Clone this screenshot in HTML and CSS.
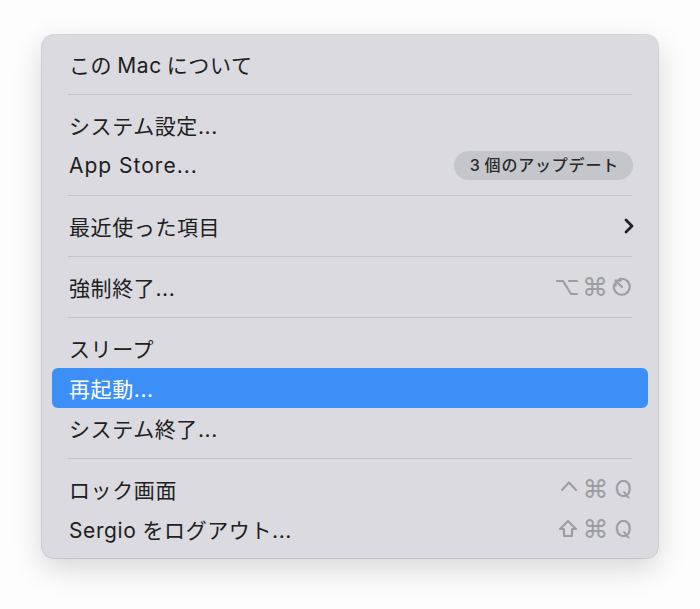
FILE: index.html
```html
<!DOCTYPE html>
<html lang="ja">
<head>
  <meta charset="UTF-8" />
  <meta name="viewport" content="width=device-width, initial-scale=1.0"/>
  <title>Apple Menu</title>
  <link rel="stylesheet" href="styles.css">
</head>
<body>
  <div class="menu">
    <div class="item"><span>この<span class="latin">Mac</span>について</span></div>

    <div class="sep"></div>

    <div class="item"><span>システム設定...</span></div>
    <div class="item">
      <span class="wide">App Store...</span>
      <span class="badge">3<span class="gap"></span>個のアップデート</span>
    </div>

    <div class="sep"></div>

    <div class="item">
      <span>最近使った項目</span>
      <svg class="chevron" width="12" height="18" viewBox="0 0 12 18">
        <polyline points="3,3 9,9 3,15" />
      </svg>
    </div>

    <div class="sep"></div>

    <div class="item">
      <span>強制終了...</span>
      <span class="keys">
        <svg class="sym" width="22" height="20" viewBox="0 0 22 20">
          <path d="M1 4 H7 L15 17 H21" />
          <path d="M13 4 H21" />
        </svg>
        <span class="cmd">⌘</span>
        <svg class="sym" width="20" height="20" viewBox="0 0 20 20">
          <path d="M7.4 2.1 A8 8 0 1 1 2.1 7.4" />
          <path d="M4.2 4.2 L10 10" />
          <path d="M3.6 8.8 V3.6 H8.8" />
        </svg>
      </span>
    </div>

    <div class="sep"></div>

    <div class="item"><span>スリープ</span></div>
    <div class="item active"><span>再起動...</span></div>
    <div class="item"><span>システム終了...</span></div>

    <div class="sep"></div>

    <div class="item">
      <span>ロック画面</span>
      <span class="keys">
        <svg class="sym" width="18" height="20" viewBox="0 0 18 20">
          <polyline points="2,11 9,3.5 16,11" />
        </svg>
        <span class="cmd">⌘</span><span class="q">Q</span>
      </span>
    </div>
    <div class="item">
      <span>Sergio<span class="gap"></span>をログアウト...</span>
      <span class="keys">
        <svg class="sym" width="20" height="20" viewBox="0 0 20 20">
          <path d="M10 2 L18 10 H14 V17 H6 V10 H2 Z" />
        </svg>
        <span class="cmd">⌘</span><span class="q">Q</span>
      </span>
    </div>
  </div>
</body>
</html>
```

FILE: styles.css
```css
html {
  background: #fdfdfd;
}

body {
  margin: 0;
  padding: 35px 0 51px 42px;
  font-family: 'Inter', 'Noto Sans CJK JP', sans-serif;
}

.menu {
  width: 616px;
  padding: 9px 10px;
  box-sizing: border-box;
  background: #dadae0;
  border-radius: 12px;
  box-shadow: 0 0 0 1px rgba(0,0,0,0.13), 0 10px 30px rgba(0,0,0,0.16);
}

.item {
  height: 40px;
  display: flex;
  align-items: center;
  justify-content: space-between;
  padding: 0 16px 0 17px;
  border-radius: 6px;
  font-size: 21px;
  letter-spacing: 0.6px;
  color: #202020;
}

.item.active {
  background: #3c8ff7;
  color: #fff;
}

.wide {
  letter-spacing: 1px;
}

.latin {
  margin: 0 5px;
}

.gap {
  display: inline-block;
  width: 6px;
}

.sep {
  height: 1px;
  margin: 10px 16px;
  background: #c2c2c8;
}

.badge {
  height: 29px;
  line-height: 29px;
  padding: 0 14px 0 16px;
  border-radius: 15px;
  background: #c5c5cc;
  font-size: 16px;
  font-weight: 500;
  letter-spacing: 0.8px;
  color: #2a2a2a;
  margin-right: -1px;
}

.badge .gap {
  width: 4px;
}

.chevron polyline {
  fill: none;
  stroke: #222;
  stroke-width: 2.8;
  stroke-linecap: round;
  stroke-linejoin: round;
}

.chevron {
  margin-right: -3px;
}

.keys {
  display: flex;
  align-items: center;
  gap: 4px;
  color: #9d9da3;
  font-size: 22px;
  letter-spacing: 0;
}

.keys .cmd {
  font-size: 26px;
  line-height: 26px;
}

.keys .q {
  font-size: 23px;
  margin-left: 2px;
}

.sym path,
.sym polyline {
  fill: none;
  stroke: #9d9da3;
  stroke-width: 2.1;
  stroke-linecap: round;
  stroke-linejoin: round;
}
```
